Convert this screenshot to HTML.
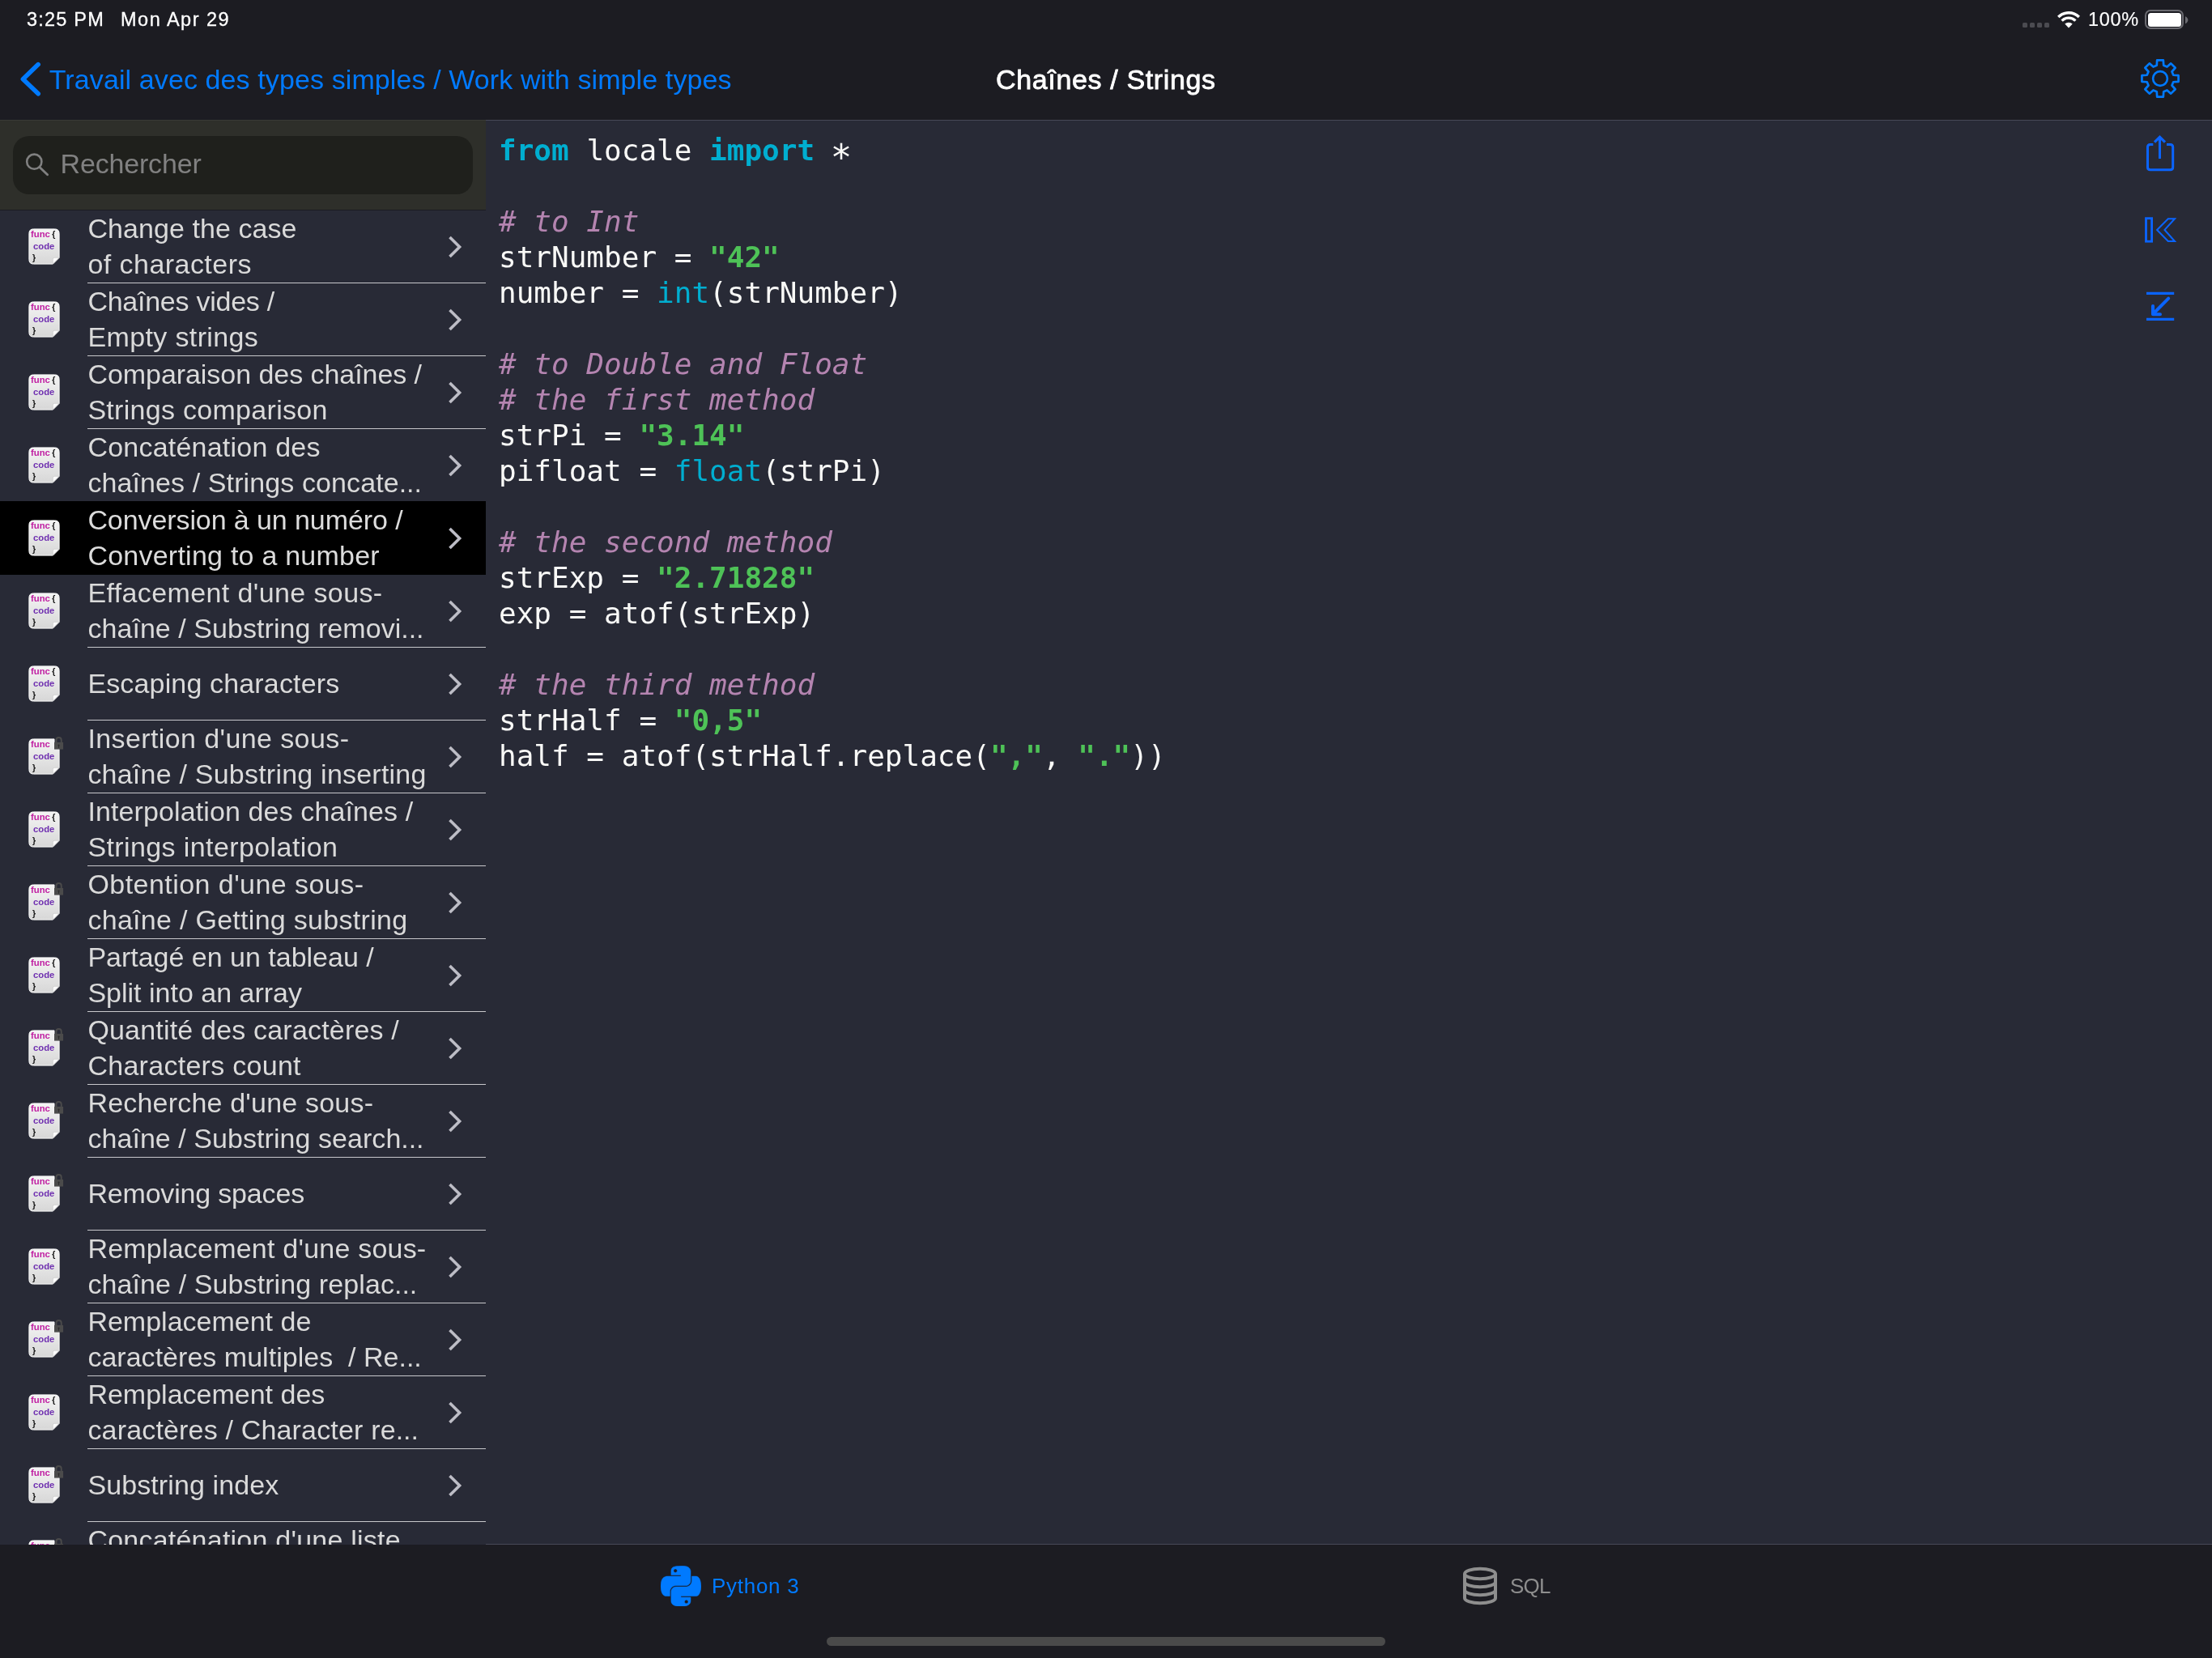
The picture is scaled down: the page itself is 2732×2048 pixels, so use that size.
<!DOCTYPE html>
<html lang="fr"><head><meta charset="utf-8"><title>Chaînes / Strings</title>
<style>
html,body{margin:0;padding:0;background:#282a36;}
body{width:2732px;height:2048px;position:relative;overflow:hidden;font-family:"Liberation Sans",sans-serif;-webkit-font-smoothing:antialiased;}
*{box-sizing:border-box;}
.abs{position:absolute;}
#top{will-change:transform;position:absolute;left:0;top:0;width:2732px;height:148px;background:#1c1c22;}
#topline{position:absolute;left:0;top:148px;width:2732px;height:1px;background:linear-gradient(90deg,#393a36 0,#393a36 600px,#474957 600px);}
.st{position:absolute;color:#fff;font-size:23.5px;line-height:30px;white-space:nowrap;top:9px;font-weight:normal;-webkit-text-stroke:0.3px #fff;will-change:transform;}
#pct{-webkit-text-stroke:0.15px #fff;}
#back{position:absolute;left:60.75px;top:78px;color:#007aff;font-size:34px;line-height:40px;white-space:nowrap;}
#title{position:absolute;left:1230.25px;top:78px;color:#fff;font-size:34px;line-height:40px;font-weight:normal;-webkit-text-stroke:0.8px #fff;white-space:nowrap;will-change:transform;}
#side{will-change:transform;position:absolute;left:0;top:149px;width:600px;height:1759px;overflow:hidden;background:#282a36;}
#sbar{position:absolute;left:0;top:0;width:600px;height:110px;background:#2e2f2a;}
#sbarline{position:absolute;left:0;top:110px;width:600px;height:1px;background:#1b1c22;}
#sfield{position:absolute;left:16px;top:19px;width:568px;height:72px;border-radius:20px;background:#1f201c;}
#sph{position:absolute;left:74.5px;top:33px;color:#818181;font-size:34px;line-height:40px;white-space:nowrap;}
.row{position:absolute;left:0;width:600px;height:90px;}
.row.sel{background:#000;margin-top:-1px;height:91px;padding-top:1px;}
.row.sel .ic,.row.sel .chev,.row.sel .tx{margin-top:1px;}
.row .sep{position:absolute;left:108px;right:0;bottom:0;height:1px;background:#c8c8cc;}
.row .tx{position:absolute;left:108.4px;top:0;color:#dadada;font-size:34px;line-height:44px;white-space:nowrap;}
.row .tx span{display:block;height:44px;}
.row.two .tx{top:0px;}
.row .tx .el{display:inline;letter-spacing:-0.1px;}
.row.one .tx{top:22px;}
.row.sel .tx{color:#dcdcdc;}
.chev{position:absolute;left:552px;top:30px;}
.ic{position:absolute;left:35px;top:22px;width:39px;height:45px;}
.ic .icbg{position:absolute;left:-4px;top:-4px;}
.ic .t{position:absolute;font-weight:bold;font-size:11.3px;line-height:12px;white-space:nowrap;}
.ic .f1{left:3px;top:1px;color:#c01fa2;}
.ic .f2{left:6px;top:16px;color:#6f2fb0;}
.ic .b1{left:29.3px;top:1px;color:#111;font-size:10.5px;}
.ic .b2{left:5px;top:30.2px;color:#111;font-size:10.5px;}
.ic .lk{position:absolute;left:31px;top:-7px;}
#code{will-change:transform;position:absolute;left:616px;top:164px;margin:0;font-family:"DejaVu Sans Mono","Liberation Mono",monospace;font-size:36px;line-height:44px;color:#f9f9f7;white-space:pre;letter-spacing:0;}
#code .ast{position:relative;top:11.5px;left:-2px;font-size:44px;line-height:0;}
#code .k{color:#00aed0;font-weight:bold;}
#code .b{color:#00aed0;}
#code .s{color:#4ec257;font-weight:bold;}
#code .c{color:#b484b0;font-style:italic;}
#tab{will-change:transform;position:absolute;left:0;top:1908px;width:2732px;height:140px;background:#1c1c22;}
#tabline{position:absolute;left:600px;top:1907px;width:2132px;height:1px;background:#474957;}
#py{will-change:transform;position:absolute;left:879px;top:1943px;color:#007aff;font-size:26px;line-height:32px;white-space:nowrap;}
#sql{will-change:transform;position:absolute;left:1865px;top:1943px;color:#8e8e8e;font-size:26px;line-height:32px;white-space:nowrap;}
#home{position:absolute;left:1021px;top:2022px;width:690px;height:11px;border-radius:6px;background:#4a4a4a;}
</style></head><body>
<svg width="0" height="0" style="position:absolute"><defs><linearGradient id="pg" x1="0" y1="0" x2="0" y2="1"><stop offset="0" stop-color="#f4f4f4"/><stop offset="1" stop-color="#d7d7d7"/></linearGradient></defs></svg>
<div id="top"><div class="st" id="time" style="left:33px"><span style="letter-spacing:1.200px">3:25 PM</span></div><div class="st" id="date" style="left:149px"><span style="letter-spacing:1.500px">Mon Apr 29</span></div><div class="abs" style="left:2498px;top:28px;width:6px;height:6px;border-radius:1.5px;background:#4b4b51"></div><div class="abs" style="left:2507px;top:28px;width:6px;height:6px;border-radius:1.5px;background:#4b4b51"></div><div class="abs" style="left:2516px;top:28px;width:6px;height:6px;border-radius:1.5px;background:#4b4b51"></div><div class="abs" style="left:2525px;top:28px;width:6px;height:6px;border-radius:1.5px;background:#4b4b51"></div><svg class="abs" style="left:2539px;top:11px" width="32" height="26" viewBox="0 0 32 26"><g fill="none" stroke="#fff" stroke-width="3.4"><path d="M3.2 10.0A18.2 18.2 0 0 1 28.8 10.0"/><path d="M7.6 14.6A11.9 11.9 0 0 1 24.4 14.6"/></g><path d="M16 23.4L11.3 18.6A6.6 6.6 0 0 1 20.7 18.6Z" fill="#fff"/></svg><div class="st" id="pct" style="left:2579px"><span style="letter-spacing:0.700px">100%</span></div><div class="abs" style="left:2649px;top:12px;width:48px;height:24px;border:2px solid #6b6b71;border-radius:7px"></div><div class="abs" style="left:2652.5px;top:15.5px;width:41px;height:17px;border-radius:3.5px;background:#fff"></div><svg class="abs" style="left:2698.5px;top:19.5px" width="4" height="10" viewBox="0 0 4 10"><path d="M0 0.3C2.2 1.2 3.4 3 3.4 4.8S2.2 8.4 0 9.3Z" fill="#6b6b71"/></svg><svg class="abs" style="left:22px;top:74px" width="34" height="50" viewBox="0 0 34 50"><path d="M25.2 5.6L6.4 23.7L25.2 41.8" fill="none" stroke="#007aff" stroke-width="5.6" stroke-linecap="round" stroke-linejoin="round"/></svg><div id="back"><span style="letter-spacing:0.106px">Travail avec des types simples / Work with simple types</span></div><div id="title"><span style="letter-spacing:0.640px">Chaînes / Strings</span></div><svg class="abs" style="left:2638px;top:67px" width="60" height="60" viewBox="0 0 60 60"><path d="M25.76 13.74 L26.17 7.42 L33.83 7.42 L34.24 13.74 L38.50 15.51 L43.26 11.33 L48.67 16.74 L44.49 21.50 L46.26 25.76 L52.58 26.17 L52.58 33.83 L46.26 34.24 L44.49 38.50 L48.67 43.26 L43.26 48.67 L38.50 44.49 L34.24 46.26 L33.83 52.58 L26.17 52.58 L25.76 46.26 L21.50 44.49 L16.74 48.67 L11.33 43.26 L15.51 38.50 L13.74 34.24 L7.42 33.83 L7.42 26.17 L13.74 25.76 L15.51 21.50 L11.33 16.74 L16.74 11.33 L21.50 15.51Z" fill="none" stroke="#007aff" stroke-width="2.7" stroke-linejoin="round"/><circle cx="30" cy="30" r="8.9" fill="none" stroke="#007aff" stroke-width="2.6"/></svg></div><div id="topline"></div>
<pre id="code"><span class="k">from</span> locale <span class="k">import</span> <span class="ast">*</span>

<span class="c"># to Int</span>
strNumber = <span class="s">"42"</span>
number = <span class="b">int</span>(strNumber)

<span class="c"># to Double and Float</span>
<span class="c"># the first method</span>
strPi = <span class="s">"3.14"</span>
pifloat = <span class="b">float</span>(strPi)

<span class="c"># the second method</span>
strExp = <span class="s">"2.71828"</span>
exp = atof(strExp)

<span class="c"># the third method</span>
strHalf = <span class="s">"0,5"</span>
half = atof(strHalf.replace(<span class="s">","</span>, <span class="s">"."</span>))</pre>
<svg class="abs" style="left:2640px;top:160px" width="60" height="60" viewBox="2640 160 60 60"><g fill="none" stroke="#0a64ff" stroke-width="3"><path d="M2659.3 178.4H2655.7Q2652.5 178.4 2652.5 181.6V206.6Q2652.5 209.8 2655.7 209.8H2680.5Q2683.7 209.8 2683.7 206.6V181.6Q2683.7 178.4 2680.5 178.4H2676"/><path d="M2667.5 196V169.5"/><path d="M2661 175.6L2667.5 169.3L2674 175.6" stroke-width="3.2"/></g></svg><svg class="abs" style="left:2640px;top:260px" width="60" height="50" viewBox="2640 260 60 50"><g fill="none" stroke="#0a64ff" stroke-width="2.8" stroke-linejoin="miter"><rect x="2650.5" y="269.7" width="7.1" height="28.5"/><path d="M2677.8 270.3H2686L2673.5 283.9L2686 298H2677.8L2664.1 283.9Z" stroke-width="2.05"/></g></svg><svg class="abs" style="left:2640px;top:350px" width="60" height="60" viewBox="2640 350 60 60"><g fill="none" stroke="#0a64ff"><path d="M2651 362.4H2685.2M2651 394.4H2685.2" stroke-width="3.1"/><path d="M2678.2 368.6L2660 387" stroke-width="4" stroke-linecap="round"/><path d="M2659 378V388.2H2668" stroke-width="4" stroke-linecap="round" stroke-linejoin="round"/></g></svg><div id="side"><div id="sbar"><div id="sfield"></div><svg class="abs" style="left:30px;top:38px" width="32" height="32" viewBox="0 0 32 32"><circle cx="12.3" cy="12.7" r="9.1" fill="none" stroke="#808080" stroke-width="2.6"/><path d="M18.9 19.5L28.6 28.8" stroke="#808080" stroke-width="2.9" stroke-linecap="round"/></svg><div id="sph"><span style="letter-spacing:-0.167px">Rechercher</span></div></div><div id="sbarline"></div>
<div class="row two" style="top:111px"><div class="ic"><svg class="icbg" width="47" height="53" viewBox="-4 -4 47 53"><path d="M6.4 0.9H32.6Q38.1 0.9 38.1 6.4V36.3L30.3 44.1H6.4Q0.9 44.1 0.9 38.6V6.4Q0.9 0.9 6.4 0.9Z" fill="url(#pg)" stroke="#fafafa" stroke-width="1"/><path d="M30.3 44.1V38.2Q30.3 36.3 32.2 36.3H38.1Z" fill="#fbfbfb" stroke="#c4c4c4" stroke-width="0.6"/></svg><span class="t f1">func</span><span class="t b1">{</span><span class="t f2">code</span><span class="t b2">}</span></div><div class="tx"><span id="r0a" style="letter-spacing:0.071px">Change the case</span><span id="r0b" style="letter-spacing:0.458px">of characters</span></div><svg class="chev" width="20" height="30" viewBox="0 0 20 30"><path d="M3.5 3L15.6 15L3.5 27" fill="none" stroke="#bdbdc6" stroke-width="3.6" stroke-linecap="butt" stroke-linejoin="miter"/></svg><div class="sep"></div></div>
<div class="row two" style="top:201px"><div class="ic"><svg class="icbg" width="47" height="53" viewBox="-4 -4 47 53"><path d="M6.4 0.9H32.6Q38.1 0.9 38.1 6.4V36.3L30.3 44.1H6.4Q0.9 44.1 0.9 38.6V6.4Q0.9 0.9 6.4 0.9Z" fill="url(#pg)" stroke="#fafafa" stroke-width="1"/><path d="M30.3 44.1V38.2Q30.3 36.3 32.2 36.3H38.1Z" fill="#fbfbfb" stroke="#c4c4c4" stroke-width="0.6"/></svg><span class="t f1">func</span><span class="t b1">{</span><span class="t f2">code</span><span class="t b2">}</span></div><div class="tx"><span id="r1a" style="letter-spacing:-0.251px">Chaînes vides /</span><span id="r1b" style="letter-spacing:0.376px">Empty strings</span></div><svg class="chev" width="20" height="30" viewBox="0 0 20 30"><path d="M3.5 3L15.6 15L3.5 27" fill="none" stroke="#bdbdc6" stroke-width="3.6" stroke-linecap="butt" stroke-linejoin="miter"/></svg><div class="sep"></div></div>
<div class="row two" style="top:291px"><div class="ic"><svg class="icbg" width="47" height="53" viewBox="-4 -4 47 53"><path d="M6.4 0.9H32.6Q38.1 0.9 38.1 6.4V36.3L30.3 44.1H6.4Q0.9 44.1 0.9 38.6V6.4Q0.9 0.9 6.4 0.9Z" fill="url(#pg)" stroke="#fafafa" stroke-width="1"/><path d="M30.3 44.1V38.2Q30.3 36.3 32.2 36.3H38.1Z" fill="#fbfbfb" stroke="#c4c4c4" stroke-width="0.6"/></svg><span class="t f1">func</span><span class="t b1">{</span><span class="t f2">code</span><span class="t b2">}</span></div><div class="tx"><span id="r2a" style="letter-spacing:-0.051px">Comparaison des chaînes /</span><span id="r2b" style="letter-spacing:0.294px">Strings comparison</span></div><svg class="chev" width="20" height="30" viewBox="0 0 20 30"><path d="M3.5 3L15.6 15L3.5 27" fill="none" stroke="#bdbdc6" stroke-width="3.6" stroke-linecap="butt" stroke-linejoin="miter"/></svg><div class="sep"></div></div>
<div class="row two" style="top:381px"><div class="ic"><svg class="icbg" width="47" height="53" viewBox="-4 -4 47 53"><path d="M6.4 0.9H32.6Q38.1 0.9 38.1 6.4V36.3L30.3 44.1H6.4Q0.9 44.1 0.9 38.6V6.4Q0.9 0.9 6.4 0.9Z" fill="url(#pg)" stroke="#fafafa" stroke-width="1"/><path d="M30.3 44.1V38.2Q30.3 36.3 32.2 36.3H38.1Z" fill="#fbfbfb" stroke="#c4c4c4" stroke-width="0.6"/></svg><span class="t f1">func</span><span class="t b1">{</span><span class="t f2">code</span><span class="t b2">}</span></div><div class="tx"><span id="r3a" style="letter-spacing:0.219px">Concaténation des</span><span id="r3b" style="letter-spacing:0.102px">chaînes / Strings concate<span class="el">...</span></span></div><svg class="chev" width="20" height="30" viewBox="0 0 20 30"><path d="M3.5 3L15.6 15L3.5 27" fill="none" stroke="#bdbdc6" stroke-width="3.6" stroke-linecap="butt" stroke-linejoin="miter"/></svg></div>
<div class="row two sel" style="top:471px"><div class="ic"><svg class="icbg" width="47" height="53" viewBox="-4 -4 47 53"><path d="M6.4 0.9H32.6Q38.1 0.9 38.1 6.4V36.3L30.3 44.1H6.4Q0.9 44.1 0.9 38.6V6.4Q0.9 0.9 6.4 0.9Z" fill="url(#pg)" stroke="#fafafa" stroke-width="1"/><path d="M30.3 44.1V38.2Q30.3 36.3 32.2 36.3H38.1Z" fill="#fbfbfb" stroke="#c4c4c4" stroke-width="0.6"/></svg><span class="t f1">func</span><span class="t b1">{</span><span class="t f2">code</span><span class="t b2">}</span></div><div class="tx"><span id="r4a" style="letter-spacing:-0.087px">Conversion à un numéro /</span><span id="r4b" style="letter-spacing:0.238px">Converting to a number</span></div><svg class="chev" width="20" height="30" viewBox="0 0 20 30"><path d="M3.5 3L15.6 15L3.5 27" fill="none" stroke="#bdbdc6" stroke-width="3.6" stroke-linecap="butt" stroke-linejoin="miter"/></svg></div>
<div class="row two" style="top:561px"><div class="ic"><svg class="icbg" width="47" height="53" viewBox="-4 -4 47 53"><path d="M6.4 0.9H32.6Q38.1 0.9 38.1 6.4V36.3L30.3 44.1H6.4Q0.9 44.1 0.9 38.6V6.4Q0.9 0.9 6.4 0.9Z" fill="url(#pg)" stroke="#fafafa" stroke-width="1"/><path d="M30.3 44.1V38.2Q30.3 36.3 32.2 36.3H38.1Z" fill="#fbfbfb" stroke="#c4c4c4" stroke-width="0.6"/></svg><span class="t f1">func</span><span class="t b1">{</span><span class="t f2">code</span><span class="t b2">}</span></div><div class="tx"><span id="r5a" style="letter-spacing:0.393px">Effacement d'une sous-</span><span id="r5b" style="letter-spacing:0.056px">chaîne / Substring removi<span class="el">...</span></span></div><svg class="chev" width="20" height="30" viewBox="0 0 20 30"><path d="M3.5 3L15.6 15L3.5 27" fill="none" stroke="#bdbdc6" stroke-width="3.6" stroke-linecap="butt" stroke-linejoin="miter"/></svg><div class="sep"></div></div>
<div class="row one" style="top:651px"><div class="ic"><svg class="icbg" width="47" height="53" viewBox="-4 -4 47 53"><path d="M6.4 0.9H32.6Q38.1 0.9 38.1 6.4V36.3L30.3 44.1H6.4Q0.9 44.1 0.9 38.6V6.4Q0.9 0.9 6.4 0.9Z" fill="url(#pg)" stroke="#fafafa" stroke-width="1"/><path d="M30.3 44.1V38.2Q30.3 36.3 32.2 36.3H38.1Z" fill="#fbfbfb" stroke="#c4c4c4" stroke-width="0.6"/></svg><span class="t f1">func</span><span class="t b1">{</span><span class="t f2">code</span><span class="t b2">}</span></div><div class="tx"><span id="r6a" style="letter-spacing:0.153px">Escaping characters</span></div><svg class="chev" width="20" height="30" viewBox="0 0 20 30"><path d="M3.5 3L15.6 15L3.5 27" fill="none" stroke="#bdbdc6" stroke-width="3.6" stroke-linecap="butt" stroke-linejoin="miter"/></svg><div class="sep"></div></div>
<div class="row two" style="top:741px"><div class="ic"><svg class="icbg" width="47" height="53" viewBox="-4 -4 47 53"><path d="M6.4 0.9H32V13.4H38.1V36.3L30.3 44.1H6.4Q0.9 44.1 0.9 38.6V6.4Q0.9 0.9 6.4 0.9Z" fill="url(#pg)" stroke="#fafafa" stroke-width="1"/><path d="M30.3 44.1V38.2Q30.3 36.3 32.2 36.3H38.1Z" fill="#fbfbfb" stroke="#c4c4c4" stroke-width="0.6"/></svg><span class="t f1">func</span><span class="t f2">code</span><span class="t b2">}</span><svg class="lk" width="16" height="24" viewBox="0 0 16 24"><path d="M3.45 12.5V9.2A3.15 3.15 0 0 1 9.75 9.2V12.5" fill="none" stroke="#4b4b4b" stroke-width="1.9"/><rect x="1" y="11.9" width="11.1" height="8.7" fill="#4b4b4b"/><path d="M6.55 14.6a1.05 1.05 0 0 1 .55 1.95V18.8H6V16.55A1.05 1.05 0 0 1 6.55 14.6Z" fill="#2c2c2c"/></svg></div><div class="tx"><span id="r7a" style="letter-spacing:0.400px">Insertion d'une sous-</span><span id="r7b" style="letter-spacing:0.222px">chaîne / Substring inserting</span></div><svg class="chev" width="20" height="30" viewBox="0 0 20 30"><path d="M3.5 3L15.6 15L3.5 27" fill="none" stroke="#bdbdc6" stroke-width="3.6" stroke-linecap="butt" stroke-linejoin="miter"/></svg><div class="sep"></div></div>
<div class="row two" style="top:831px"><div class="ic"><svg class="icbg" width="47" height="53" viewBox="-4 -4 47 53"><path d="M6.4 0.9H32.6Q38.1 0.9 38.1 6.4V36.3L30.3 44.1H6.4Q0.9 44.1 0.9 38.6V6.4Q0.9 0.9 6.4 0.9Z" fill="url(#pg)" stroke="#fafafa" stroke-width="1"/><path d="M30.3 44.1V38.2Q30.3 36.3 32.2 36.3H38.1Z" fill="#fbfbfb" stroke="#c4c4c4" stroke-width="0.6"/></svg><span class="t f1">func</span><span class="t b1">{</span><span class="t f2">code</span><span class="t b2">}</span></div><div class="tx"><span id="r8a" style="letter-spacing:0.115px">Interpolation des chaînes /</span><span id="r8b" style="letter-spacing:0.400px">Strings interpolation</span></div><svg class="chev" width="20" height="30" viewBox="0 0 20 30"><path d="M3.5 3L15.6 15L3.5 27" fill="none" stroke="#bdbdc6" stroke-width="3.6" stroke-linecap="butt" stroke-linejoin="miter"/></svg><div class="sep"></div></div>
<div class="row two" style="top:921px"><div class="ic"><svg class="icbg" width="47" height="53" viewBox="-4 -4 47 53"><path d="M6.4 0.9H32V13.4H38.1V36.3L30.3 44.1H6.4Q0.9 44.1 0.9 38.6V6.4Q0.9 0.9 6.4 0.9Z" fill="url(#pg)" stroke="#fafafa" stroke-width="1"/><path d="M30.3 44.1V38.2Q30.3 36.3 32.2 36.3H38.1Z" fill="#fbfbfb" stroke="#c4c4c4" stroke-width="0.6"/></svg><span class="t f1">func</span><span class="t f2">code</span><span class="t b2">}</span><svg class="lk" width="16" height="24" viewBox="0 0 16 24"><path d="M3.45 12.5V9.2A3.15 3.15 0 0 1 9.75 9.2V12.5" fill="none" stroke="#4b4b4b" stroke-width="1.9"/><rect x="1" y="11.9" width="11.1" height="8.7" fill="#4b4b4b"/><path d="M6.55 14.6a1.05 1.05 0 0 1 .55 1.95V18.8H6V16.55A1.05 1.05 0 0 1 6.55 14.6Z" fill="#2c2c2c"/></svg></div><div class="tx"><span id="r9a" style="letter-spacing:0.450px">Obtention d'une sous-</span><span id="r9b" style="letter-spacing:0.290px">chaîne / Getting substring</span></div><svg class="chev" width="20" height="30" viewBox="0 0 20 30"><path d="M3.5 3L15.6 15L3.5 27" fill="none" stroke="#bdbdc6" stroke-width="3.6" stroke-linecap="butt" stroke-linejoin="miter"/></svg><div class="sep"></div></div>
<div class="row two" style="top:1011px"><div class="ic"><svg class="icbg" width="47" height="53" viewBox="-4 -4 47 53"><path d="M6.4 0.9H32.6Q38.1 0.9 38.1 6.4V36.3L30.3 44.1H6.4Q0.9 44.1 0.9 38.6V6.4Q0.9 0.9 6.4 0.9Z" fill="url(#pg)" stroke="#fafafa" stroke-width="1"/><path d="M30.3 44.1V38.2Q30.3 36.3 32.2 36.3H38.1Z" fill="#fbfbfb" stroke="#c4c4c4" stroke-width="0.6"/></svg><span class="t f1">func</span><span class="t b1">{</span><span class="t f2">code</span><span class="t b2">}</span></div><div class="tx"><span id="r10a" style="letter-spacing:-0.010px">Partagé en un tableau /</span><span id="r10b" style="letter-spacing:0.000px">Split into an array</span></div><svg class="chev" width="20" height="30" viewBox="0 0 20 30"><path d="M3.5 3L15.6 15L3.5 27" fill="none" stroke="#bdbdc6" stroke-width="3.6" stroke-linecap="butt" stroke-linejoin="miter"/></svg><div class="sep"></div></div>
<div class="row two" style="top:1101px"><div class="ic"><svg class="icbg" width="47" height="53" viewBox="-4 -4 47 53"><path d="M6.4 0.9H32V13.4H38.1V36.3L30.3 44.1H6.4Q0.9 44.1 0.9 38.6V6.4Q0.9 0.9 6.4 0.9Z" fill="url(#pg)" stroke="#fafafa" stroke-width="1"/><path d="M30.3 44.1V38.2Q30.3 36.3 32.2 36.3H38.1Z" fill="#fbfbfb" stroke="#c4c4c4" stroke-width="0.6"/></svg><span class="t f1">func</span><span class="t f2">code</span><span class="t b2">}</span><svg class="lk" width="16" height="24" viewBox="0 0 16 24"><path d="M3.45 12.5V9.2A3.15 3.15 0 0 1 9.75 9.2V12.5" fill="none" stroke="#4b4b4b" stroke-width="1.9"/><rect x="1" y="11.9" width="11.1" height="8.7" fill="#4b4b4b"/><path d="M6.55 14.6a1.05 1.05 0 0 1 .55 1.95V18.8H6V16.55A1.05 1.05 0 0 1 6.55 14.6Z" fill="#2c2c2c"/></svg></div><div class="tx"><span id="r11a" style="letter-spacing:0.189px">Quantité des caractères /</span><span id="r11b" style="letter-spacing:0.284px">Characters count</span></div><svg class="chev" width="20" height="30" viewBox="0 0 20 30"><path d="M3.5 3L15.6 15L3.5 27" fill="none" stroke="#bdbdc6" stroke-width="3.6" stroke-linecap="butt" stroke-linejoin="miter"/></svg><div class="sep"></div></div>
<div class="row two" style="top:1191px"><div class="ic"><svg class="icbg" width="47" height="53" viewBox="-4 -4 47 53"><path d="M6.4 0.9H32V13.4H38.1V36.3L30.3 44.1H6.4Q0.9 44.1 0.9 38.6V6.4Q0.9 0.9 6.4 0.9Z" fill="url(#pg)" stroke="#fafafa" stroke-width="1"/><path d="M30.3 44.1V38.2Q30.3 36.3 32.2 36.3H38.1Z" fill="#fbfbfb" stroke="#c4c4c4" stroke-width="0.6"/></svg><span class="t f1">func</span><span class="t f2">code</span><span class="t b2">}</span><svg class="lk" width="16" height="24" viewBox="0 0 16 24"><path d="M3.45 12.5V9.2A3.15 3.15 0 0 1 9.75 9.2V12.5" fill="none" stroke="#4b4b4b" stroke-width="1.9"/><rect x="1" y="11.9" width="11.1" height="8.7" fill="#4b4b4b"/><path d="M6.55 14.6a1.05 1.05 0 0 1 .55 1.95V18.8H6V16.55A1.05 1.05 0 0 1 6.55 14.6Z" fill="#2c2c2c"/></svg></div><div class="tx"><span id="r12a" style="letter-spacing:0.200px">Recherche d'une sous-</span><span id="r12b" style="letter-spacing:0.056px">chaîne / Substring search<span class="el">...</span></span></div><svg class="chev" width="20" height="30" viewBox="0 0 20 30"><path d="M3.5 3L15.6 15L3.5 27" fill="none" stroke="#bdbdc6" stroke-width="3.6" stroke-linecap="butt" stroke-linejoin="miter"/></svg><div class="sep"></div></div>
<div class="row one" style="top:1281px"><div class="ic"><svg class="icbg" width="47" height="53" viewBox="-4 -4 47 53"><path d="M6.4 0.9H32V13.4H38.1V36.3L30.3 44.1H6.4Q0.9 44.1 0.9 38.6V6.4Q0.9 0.9 6.4 0.9Z" fill="url(#pg)" stroke="#fafafa" stroke-width="1"/><path d="M30.3 44.1V38.2Q30.3 36.3 32.2 36.3H38.1Z" fill="#fbfbfb" stroke="#c4c4c4" stroke-width="0.6"/></svg><span class="t f1">func</span><span class="t f2">code</span><span class="t b2">}</span><svg class="lk" width="16" height="24" viewBox="0 0 16 24"><path d="M3.45 12.5V9.2A3.15 3.15 0 0 1 9.75 9.2V12.5" fill="none" stroke="#4b4b4b" stroke-width="1.9"/><rect x="1" y="11.9" width="11.1" height="8.7" fill="#4b4b4b"/><path d="M6.55 14.6a1.05 1.05 0 0 1 .55 1.95V18.8H6V16.55A1.05 1.05 0 0 1 6.55 14.6Z" fill="#2c2c2c"/></svg></div><div class="tx"><span id="r13a" style="letter-spacing:-0.179px">Removing spaces</span></div><svg class="chev" width="20" height="30" viewBox="0 0 20 30"><path d="M3.5 3L15.6 15L3.5 27" fill="none" stroke="#bdbdc6" stroke-width="3.6" stroke-linecap="butt" stroke-linejoin="miter"/></svg><div class="sep"></div></div>
<div class="row two" style="top:1371px"><div class="ic"><svg class="icbg" width="47" height="53" viewBox="-4 -4 47 53"><path d="M6.4 0.9H32.6Q38.1 0.9 38.1 6.4V36.3L30.3 44.1H6.4Q0.9 44.1 0.9 38.6V6.4Q0.9 0.9 6.4 0.9Z" fill="url(#pg)" stroke="#fafafa" stroke-width="1"/><path d="M30.3 44.1V38.2Q30.3 36.3 32.2 36.3H38.1Z" fill="#fbfbfb" stroke="#c4c4c4" stroke-width="0.6"/></svg><span class="t f1">func</span><span class="t b1">{</span><span class="t f2">code</span><span class="t b2">}</span></div><div class="tx"><span id="r14a" style="letter-spacing:0.217px">Remplacement d'une sous-</span><span id="r14b" style="letter-spacing:0.102px">chaîne / Substring replac<span class="el">...</span></span></div><svg class="chev" width="20" height="30" viewBox="0 0 20 30"><path d="M3.5 3L15.6 15L3.5 27" fill="none" stroke="#bdbdc6" stroke-width="3.6" stroke-linecap="butt" stroke-linejoin="miter"/></svg><div class="sep"></div></div>
<div class="row two" style="top:1461px"><div class="ic"><svg class="icbg" width="47" height="53" viewBox="-4 -4 47 53"><path d="M6.4 0.9H32V13.4H38.1V36.3L30.3 44.1H6.4Q0.9 44.1 0.9 38.6V6.4Q0.9 0.9 6.4 0.9Z" fill="url(#pg)" stroke="#fafafa" stroke-width="1"/><path d="M30.3 44.1V38.2Q30.3 36.3 32.2 36.3H38.1Z" fill="#fbfbfb" stroke="#c4c4c4" stroke-width="0.6"/></svg><span class="t f1">func</span><span class="t f2">code</span><span class="t b2">}</span><svg class="lk" width="16" height="24" viewBox="0 0 16 24"><path d="M3.45 12.5V9.2A3.15 3.15 0 0 1 9.75 9.2V12.5" fill="none" stroke="#4b4b4b" stroke-width="1.9"/><rect x="1" y="11.9" width="11.1" height="8.7" fill="#4b4b4b"/><path d="M6.55 14.6a1.05 1.05 0 0 1 .55 1.95V18.8H6V16.55A1.05 1.05 0 0 1 6.55 14.6Z" fill="#2c2c2c"/></svg></div><div class="tx"><span id="r15a" style="letter-spacing:0.000px">Remplacement de</span><span id="r15b" style="letter-spacing:0.022px">caractères multiples&nbsp; / Re<span class="el">...</span></span></div><svg class="chev" width="20" height="30" viewBox="0 0 20 30"><path d="M3.5 3L15.6 15L3.5 27" fill="none" stroke="#bdbdc6" stroke-width="3.6" stroke-linecap="butt" stroke-linejoin="miter"/></svg><div class="sep"></div></div>
<div class="row two" style="top:1551px"><div class="ic"><svg class="icbg" width="47" height="53" viewBox="-4 -4 47 53"><path d="M6.4 0.9H32.6Q38.1 0.9 38.1 6.4V36.3L30.3 44.1H6.4Q0.9 44.1 0.9 38.6V6.4Q0.9 0.9 6.4 0.9Z" fill="url(#pg)" stroke="#fafafa" stroke-width="1"/><path d="M30.3 44.1V38.2Q30.3 36.3 32.2 36.3H38.1Z" fill="#fbfbfb" stroke="#c4c4c4" stroke-width="0.6"/></svg><span class="t f1">func</span><span class="t b1">{</span><span class="t f2">code</span><span class="t b2">}</span></div><div class="tx"><span id="r16a" style="letter-spacing:0.000px">Remplacement des</span><span id="r16b" style="letter-spacing:0.173px">caractères / Character re<span class="el">...</span></span></div><svg class="chev" width="20" height="30" viewBox="0 0 20 30"><path d="M3.5 3L15.6 15L3.5 27" fill="none" stroke="#bdbdc6" stroke-width="3.6" stroke-linecap="butt" stroke-linejoin="miter"/></svg><div class="sep"></div></div>
<div class="row one" style="top:1641px"><div class="ic"><svg class="icbg" width="47" height="53" viewBox="-4 -4 47 53"><path d="M6.4 0.9H32V13.4H38.1V36.3L30.3 44.1H6.4Q0.9 44.1 0.9 38.6V6.4Q0.9 0.9 6.4 0.9Z" fill="url(#pg)" stroke="#fafafa" stroke-width="1"/><path d="M30.3 44.1V38.2Q30.3 36.3 32.2 36.3H38.1Z" fill="#fbfbfb" stroke="#c4c4c4" stroke-width="0.6"/></svg><span class="t f1">func</span><span class="t f2">code</span><span class="t b2">}</span><svg class="lk" width="16" height="24" viewBox="0 0 16 24"><path d="M3.45 12.5V9.2A3.15 3.15 0 0 1 9.75 9.2V12.5" fill="none" stroke="#4b4b4b" stroke-width="1.9"/><rect x="1" y="11.9" width="11.1" height="8.7" fill="#4b4b4b"/><path d="M6.55 14.6a1.05 1.05 0 0 1 .55 1.95V18.8H6V16.55A1.05 1.05 0 0 1 6.55 14.6Z" fill="#2c2c2c"/></svg></div><div class="tx"><span id="r17a" style="letter-spacing:0.108px">Substring index</span></div><svg class="chev" width="20" height="30" viewBox="0 0 20 30"><path d="M3.5 3L15.6 15L3.5 27" fill="none" stroke="#bdbdc6" stroke-width="3.6" stroke-linecap="butt" stroke-linejoin="miter"/></svg><div class="sep"></div></div>
<div class="row two" style="top:1731px"><div class="ic"><svg class="icbg" width="47" height="53" viewBox="-4 -4 47 53"><path d="M6.4 0.9H32V13.4H38.1V36.3L30.3 44.1H6.4Q0.9 44.1 0.9 38.6V6.4Q0.9 0.9 6.4 0.9Z" fill="url(#pg)" stroke="#fafafa" stroke-width="1"/><path d="M30.3 44.1V38.2Q30.3 36.3 32.2 36.3H38.1Z" fill="#fbfbfb" stroke="#c4c4c4" stroke-width="0.6"/></svg><span class="t f1">func</span><span class="t f2">code</span><span class="t b2">}</span><svg class="lk" width="16" height="24" viewBox="0 0 16 24"><path d="M3.45 12.5V9.2A3.15 3.15 0 0 1 9.75 9.2V12.5" fill="none" stroke="#4b4b4b" stroke-width="1.9"/><rect x="1" y="11.9" width="11.1" height="8.7" fill="#4b4b4b"/><path d="M6.55 14.6a1.05 1.05 0 0 1 .55 1.95V18.8H6V16.55A1.05 1.05 0 0 1 6.55 14.6Z" fill="#2c2c2c"/></svg></div><div class="tx"><span id="r18a" style="letter-spacing:0.227px">Concaténation d'une liste</span></div><svg class="chev" width="20" height="30" viewBox="0 0 20 30"><path d="M3.5 3L15.6 15L3.5 27" fill="none" stroke="#bdbdc6" stroke-width="3.6" stroke-linecap="butt" stroke-linejoin="miter"/></svg><div class="sep"></div></div>
</div>
<div id="tabline"></div><div id="tab"></div><svg class="abs" style="left:816px;top:1934px" width="50" height="50" viewBox="0 0 111.2 110.4"><g stroke="#007aff" stroke-width="1.1" stroke-linejoin="round"><path fill="#007aff" fill-rule="evenodd" d="M54.918785 0.00091927421C50.335132 0.02221727 45.957846 0.41313697 42.106285 1.0946693C30.760069 3.0991731 28.700036 7.2947714 28.700035 15.032169v10.21875h26.8125v3.40625h-26.8125h-10.0625c-7.792459 0-14.6157588 4.683717-16.7499998 13.59375c-2.46181998 10.212966-2.57101508 16.586023 0 27.25c1.9059283 7.937852 6.4575432 13.593748 14.2499998 13.59375h9.21875v-12.25c0-8.849902 7.657144-16.656248 16.75-16.65625h26.78125c7.454951 0 13.406253-6.138164 13.40625-13.625v-25.53125c0-7.2663386-6.12998-12.7247771-13.40625-13.9374997C64.281548 0.32794397 59.502438-0.02037903 54.918785 0.00091927421Zm-14.5 8.21875012579c2.769547 0 5.03125 2.2986456 5.03125 5.1249996c-0.000002 2.816336-2.261703 5.09375-5.03125 5.09375c-2.779476-0.000001-5.03125-2.277415-5.03125-5.09375c-0.000001-2.826353 2.251774-5.1249996 5.03125-5.1249996z"/><path fill="#007aff" fill-rule="evenodd" d="M85.637535 28.657169v11.90625c0 9.230755-7.825895 17.000001-16.75 17h-26.78125c-7.335833 0-13.406249 6.278483-13.40625 13.625v25.531247c0 7.266344 6.318588 11.540324 13.40625 13.625004c8.487331 2.49561 16.626237 2.94663 26.78125 0c6.750155-1.95439 13.406253-5.88761 13.40625-13.625004V86.500919h-26.78125v-3.40625h26.78125h13.406254c7.792461 0 10.696251-5.435408 13.406241-13.59375c2.79933-8.398886 2.68022-16.475776 0-27.25c-1.92578-7.757441-5.60387-13.59375-13.406241-13.59375zm-15.0625 64.65625c2.779478 0.000003 5.03125 2.277417 5.03125 5.093747c-0.000002 2.826354-2.251775 5.125004-5.03125 5.125004c-2.76955 0-5.03125-2.29865-5.03125-5.125004c0.000002-2.81633 2.261697-5.093747 5.03125-5.093747z"/></g></svg><div id="py"><span style="letter-spacing:0.714px">Python 3</span></div><svg class="abs" style="left:1802px;top:1930px" width="52" height="58" viewBox="1802 1930 52 58"><g fill="none" stroke="#8e8e8e" stroke-width="4"><ellipse cx="1828" cy="1944" rx="19" ry="6.2"/><path d="M1809 1944V1974C1809 1977.4 1817.5 1980.2 1828 1980.2S1847 1977.4 1847 1974V1944"/><path d="M1809 1954C1809 1957.4 1817.5 1960.2 1828 1960.2S1847 1957.4 1847 1954"/><path d="M1809 1964C1809 1967.4 1817.5 1970.2 1828 1970.2S1847 1967.4 1847 1964"/></g></svg><div id="sql"><span style="letter-spacing:-0.800px">SQL</span></div><div id="home"></div>
</body></html>
